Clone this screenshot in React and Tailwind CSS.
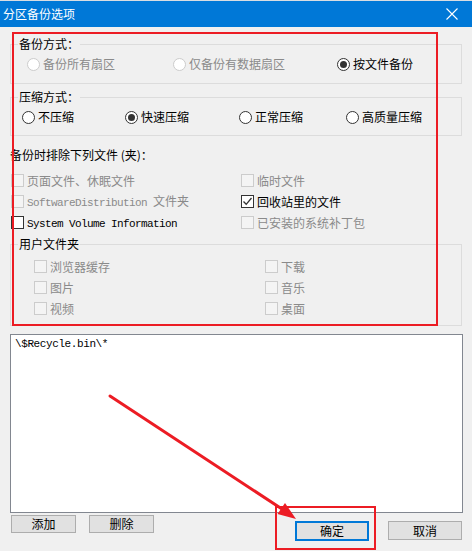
import React from "react";

const CJK = { fontFamily: '"Noto Sans CJK SC", "Microsoft YaHei", sans-serif' };
const MONO = { fontFamily: '"Liberation Mono", "Noto Sans CJK SC", monospace' };

function Radio({ checked, disabled }) {
  return (
    <span
      className={`flex items-center justify-center w-[13px] h-[13px] rounded-full border shrink-0 bg-white ${
        disabled ? "border-[#cccccc]" : "border-[#333333]"
      }`}
    >
      {checked && <span className="w-[7px] h-[7px] rounded-full bg-[#333333]" />}
    </span>
  );
}

function RadioItem({ label, checked, disabled, w }) {
  return (
    <div className={`flex items-center h-[16px] gap-[3px] ${w || ""}`}>
      <Radio checked={checked} disabled={disabled} />
      <span className={`text-[12px] leading-[16px] ${disabled ? "text-[#8a8a8a]" : "text-black"}`}>{label}</span>
    </div>
  );
}

function Check({ checked, disabled }) {
  return (
    <span
      className={`flex items-center justify-center w-[13px] h-[13px] border shrink-0 ${
        disabled ? "border-[#cccccc] bg-[#f4f4f4]" : "border-[#333333] bg-white"
      }`}
    >
      {checked && (
        <svg width="11" height="11" viewBox="0 0 11 11">
          <path d="M1.5 5.5 L4.2 8.3 L9.5 2" fill="none" stroke="#333" strokeWidth="1.3" />
        </svg>
      )}
    </span>
  );
}

function CheckItem({ children, checked, disabled }) {
  return (
    <div className="flex items-center h-[21px] gap-[3px]">
      <Check checked={checked} disabled={disabled} />
      <span
        className={`text-[12px] leading-[16px] whitespace-nowrap ${disabled ? "text-[#8a8a8a]" : "text-black"}`}
      >
        {children}
      </span>
    </div>
  );
}

function Legend({ children }) {
  return (
    <span className="block w-fit -mt-[8px] ml-[7px] px-[1px] bg-[#f0f0f0] text-[12px] leading-[14px] text-black">
      {children}
    </span>
  );
}

function Mono({ children }) {
  return (
    <span style={MONO} className="text-[11px] tracking-[-0.6px]">
      {children}
    </span>
  );
}

export default function App() {
  return (
    <div className="relative w-[472px] h-[551px] bg-[#f0f0f0] overflow-hidden" style={CJK}>
      <div className="h-[1px] bg-[#d9dde2]" />
      <div className="h-[26px] bg-[#0078d7] flex items-center justify-between pl-[3px] pr-[14px]">
        <span className="text-white text-[12px] leading-[16px]">分区备份选项</span>
        <svg width="12" height="12" viewBox="0 0 12 12">
          <path d="M0.5 0.5 L11.5 11.5 M11.5 0.5 L0.5 11.5" stroke="white" strokeWidth="1.1" />
        </svg>
      </div>

      <div className="pl-[10px] pr-[10px]">
        {/* Group 1 */}
        <div className="mt-[17px] h-[40px] border border-[#dcdcdc]">
          <Legend>备份方式：</Legend>
          <div className="flex mt-[5px] pl-[16px]">
            <RadioItem label="备份所有扇区" disabled w="w-[146px]" />
            <RadioItem label="仅备份有数据扇区" disabled w="w-[164px]" />
            <RadioItem label="按文件备份" checked />
          </div>
        </div>

        {/* Group 2 */}
        <div className="mt-[13px] h-[39px] border border-[#dcdcdc]">
          <Legend>压缩方式：</Legend>
          <div className="flex mt-[5px] pl-[11px]">
            <RadioItem label="不压缩" w="w-[103px]" />
            <RadioItem label="快速压缩" checked w="w-[114px]" />
            <RadioItem label="正常压缩" w="w-[107px]" />
            <RadioItem label="高质量压缩" />
          </div>
        </div>

        <div className="mt-[12px] text-[12px] leading-[14px] text-black">备份时排除下列文件 (夹)：</div>

        <div className="mt-[8px] grid grid-cols-[230px_1fr] pl-[1px]">
          <CheckItem disabled>页面文件、休眠文件</CheckItem>
          <CheckItem disabled>临时文件</CheckItem>
          <CheckItem disabled>
            <Mono>SoftwareDistribution </Mono>文件夹
          </CheckItem>
          <CheckItem checked>回收站里的文件</CheckItem>
          <CheckItem>
            <Mono>System Volume Information</Mono>
          </CheckItem>
          <CheckItem disabled>已安装的系统补丁包</CheckItem>
        </div>

        {/* User folders group */}
        <div className="mt-[11px] h-[82px] border border-[#dcdcdc]">
          <Legend>用户文件夹</Legend>
          <div className="grid grid-cols-[231px_1fr] pl-[23px] mt-[5px]">
            <CheckItem disabled>浏览器缓存</CheckItem>
            <CheckItem disabled>下载</CheckItem>
            <CheckItem disabled>图片</CheckItem>
            <CheckItem disabled>音乐</CheckItem>
            <CheckItem disabled>视频</CheckItem>
            <CheckItem disabled>桌面</CheckItem>
          </div>
        </div>

        {/* Text area */}
        <div
          style={MONO}
          className="mt-[8px] w-[453px] h-[179px] border border-[#828790] bg-white px-[4px] pt-[2px] text-[11px] tracking-[-0.4px] leading-[14px] text-black"
        >
          \$Recycle.bin\*
        </div>

        {/* Buttons */}
        <div className="flex items-start">
          <button className="mt-[2px] ml-[1px] w-[65px] h-[18px] bg-[#e1e1e1] border border-[#adadad] text-[12px] leading-[14px] text-black">
            添加
          </button>
          <button className="mt-[2px] ml-[13px] w-[65px] h-[18px] bg-[#e1e1e1] border border-[#adadad] text-[12px] leading-[14px] text-black">
            删除
          </button>
          <button className="mt-[8px] ml-[141px] w-[74px] h-[20px] bg-[#e1e1e1] border-2 border-[#0078d7] text-[12px] leading-[14px] text-black">
            确定
          </button>
          <button className="mt-[8px] ml-[19px] w-[74px] h-[19px] bg-[#e1e1e1] border border-[#adadad] text-[12px] leading-[14px] text-black">
            取消
          </button>
        </div>
      </div>

      {/* Red annotations */}
      <div className="absolute left-[12px] top-[32px] w-[426px] h-[294px] border-2 border-[#ec1c24]" />
      <div className="absolute left-[275px] top-[506px] w-[101px] h-[44px] border-2 border-[#ec1c24]" />
      <svg className="absolute left-0 top-0" width="472" height="551" viewBox="0 0 472 551">
        <line x1="110" y1="396" x2="285" y2="511" stroke="#ec1c24" strokeWidth="3" strokeLinecap="round" />
        <polygon points="296,519 277.5,514 285,503" fill="#ec1c24" />
      </svg>
    </div>
  );
}
